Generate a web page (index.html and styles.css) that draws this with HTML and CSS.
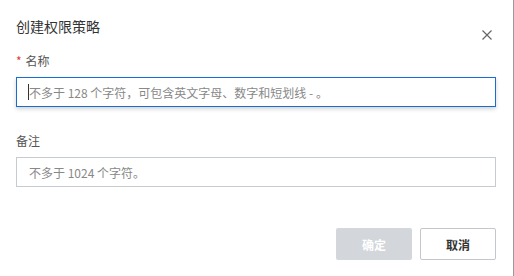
FILE: index.html
```html
<!DOCTYPE html>
<html lang="zh-CN">
<head>
<meta charset="utf-8">
<link rel="stylesheet" href="styles.css">
</head>
<body>
<div class="dialog">
  <div class="header">
    <div class="title">创建权限策略</div>
    <svg class="close" width="10" height="10" viewBox="0 0 10 10"><path d="M0.5 0.5 L9.5 9.5 M9.5 0.5 L0.5 9.5" stroke="#666" stroke-width="1.2" fill="none"/></svg>
  </div>
  <div class="form">
    <div class="item">
      <div class="label"><span class="req">*</span>名称</div>
      <div class="field focused"><span class="caret"></span><span class="ph">不多于 128 个字符，可包含英文字母、数字和短划线 - 。</span></div>
    </div>
    <div class="item">
      <div class="label">备注</div>
      <div class="field"><span class="ph">不多于 1024 个字符。</span></div>
    </div>
  </div>
  <div class="footer">
    <button class="btn primary" disabled>确定</button>
    <button class="btn cancel">取消</button>
  </div>
</div>
</body>
</html>
```
FILE: styles.css
```css
html, body {
  margin: 0;
  padding: 0;
  background: #fff;
}
body {
  width: 514px;
  height: 276px;
  overflow: hidden;
  font-family: "Noto Sans CJK SC", "Noto Sans", sans-serif;
}
.dialog {
  box-sizing: border-box;
  width: 514px;
  height: 276px;
  border-right: 1px solid #9a9a9a;
  padding: 16px 17px 0 16px;
  display: flex;
  flex-direction: column;
}
.header {
  display: flex;
  justify-content: space-between;
  align-items: flex-start;
  height: 20px;
}
.title {
  font-size: 14px;
  line-height: 20px;
  color: #333;
}
.close {
  margin-top: 14px;
  margin-right: 4px;
}
.form {
  margin-top: 16px;
  display: flex;
  flex-direction: column;
  gap: 25px;
}
.item {
  display: flex;
  flex-direction: column;
  gap: 7px;
}
.label {
  font-size: 12px;
  line-height: 18px;
  color: #555;
  display: flex;
  align-items: center;
}
.req {
  color: #e03c3c;
  margin-right: 4px;
  font-size: 12px;
}
.field {
  box-sizing: border-box;
  height: 30px;
  border: 1px solid #c6cad1;
  display: flex;
  align-items: center;
  padding-left: 12px;
  font-size: 12px;
  color: #888;
}
.field.focused {
  border-color: #1a6dd0;
  box-shadow: 0 2px 4px rgba(0, 0, 0, 0.18);
}
.caret {
  width: 1px;
  height: 16px;
  background: #333;
  margin-left: -1px;
}
.ph {
  white-space: nowrap;
}
.footer {
  margin-top: 41px;
  display: flex;
  justify-content: flex-end;
  gap: 8px;
}
.btn {
  box-sizing: border-box;
  width: 76px;
  height: 32px;
  font-family: "Noto Sans CJK SC", "Noto Sans", sans-serif;
  font-size: 12px;
  font-weight: 700;
  border-radius: 2px;
  padding: 0;
}
.btn.primary {
  background: #d3d6db;
  border: none;
  color: #fff;
}
.btn.cancel {
  background: #fff;
  border: 1px solid #c3c7cd;
  color: #333;
}
```
